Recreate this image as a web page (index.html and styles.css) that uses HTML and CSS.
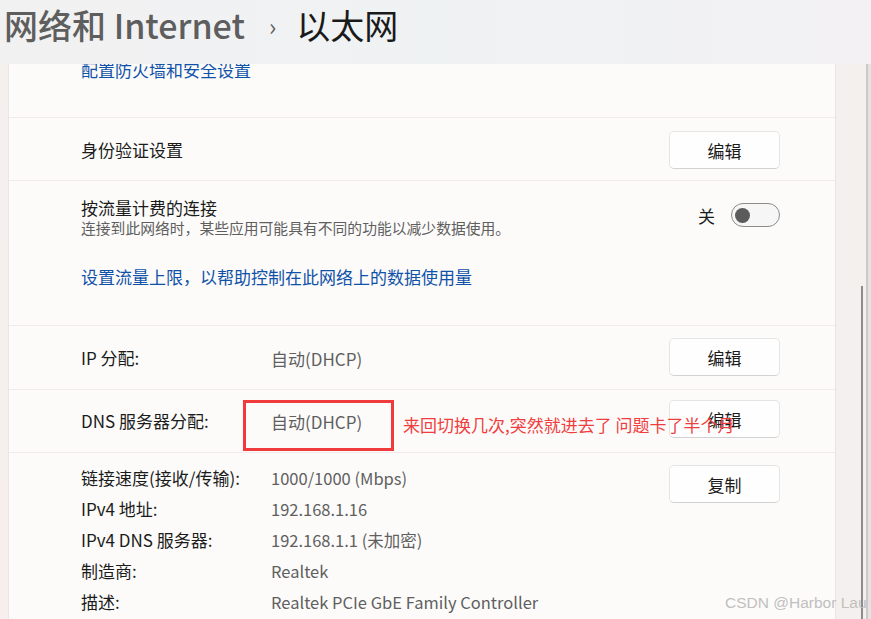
FILE: index.html
```html
<!DOCTYPE html>
<html lang="zh-CN">
<head>
<meta charset="utf-8">
<title>以太网</title>
<link rel="stylesheet" href="styles.css">
</head>
<body>
<div class="window">
  <header class="top">
    <span class="crumb">网络和 Internet</span>
    <span class="chev">›</span>
    <span class="current">以太网</span>
  </header>
  <div class="main">
    <div class="scroll">
      <section class="card">
        <div class="sec sec-fw">
          <a class="link link-fw">配置防火墙和安全设置</a>
        </div>
        <div class="sec sec-row">
          <span class="label">身份验证设置</span>
          <button class="btn">编辑</button>
        </div>
        <div class="sec sec-metered">
          <div class="metered-head">
            <div class="metered-text">
              <div class="label">按流量计费的连接</div>
              <div class="sub">连接到此网络时，某些应用可能具有不同的功能以减少数据使用。</div>
            </div>
            <div class="toggle-wrap">
              <span class="toggle-label">关</span>
              <span class="toggle"><span class="knob"></span></span>
            </div>
          </div>
          <a class="link link-limit">设置流量上限，以帮助控制在此网络上的数据使用量</a>
        </div>
        <div class="sec sec-row sec-ip">
          <div class="pair"><span class="label key">IP 分配:</span><span class="value">自动(DHCP)</span></div>
          <button class="btn">编辑</button>
        </div>
        <div class="sec sec-row sec-dns">
          <div class="pair"><span class="label key">DNS 服务器分配:</span><span class="value">自动(DHCP)</span></div>
          <button class="btn">编辑</button>
          <div class="redbox"></div>
          <div class="note">来回切换几次,突然就进去了 问题卡了半个月</div>
        </div>
        <div class="sec sec-details">
          <dl class="details">
            <dt>链接速度(接收/传输):</dt><dd>1000/1000 (Mbps)</dd>
            <dt>IPv4 地址:</dt><dd>192.168.1.16</dd>
            <dt>IPv4 DNS 服务器:</dt><dd>192.168.1.1 (未加密)</dd>
            <dt>制造商:</dt><dd>Realtek</dd>
            <dt>描述:</dt><dd>Realtek PCIe GbE Family Controller</dd>
          </dl>
          <button class="btn btn-copy">复制</button>
        </div>
      </section>
    </div>
    <div class="scrollbar"><div class="thumb"></div></div>
    <div class="edge"></div>
  </div>
</div>
<div class="watermark">CSDN @Harbor Lau</div>
</body>
</html>
```

FILE: styles.css
```css
* { box-sizing: border-box; }
html, body { margin: 0; padding: 0; }
body {
  width: 871px;
  height: 619px;
  overflow: hidden;
  background: #f4f1f0;
  font-family: "Segoe UI", "Noto Sans CJK SC", "Noto Sans", sans-serif;
  color: #1b1b1b;
  position: relative;
}
.window {
  display: flex;
  flex-direction: column;
  height: 619px;
}
.top {
  height: 64px;
  flex: none;
  display: flex;
  align-items: flex-start;
  padding: 0 0 0 4px;
  background: linear-gradient(90deg, #f2f1f2 0%, #eff2f3 50%, #f3f1f3 100%);
  font-size: 34px;
  line-height: 50px;
  white-space: nowrap;
}
.crumb { color: #5e5e5e; font-weight: 500; }
.chev { color: #5e5e5e; font-size: 24px; line-height: 52px; margin: 0 20px 0 24px; }
.current { color: #1a1a1a; }
.main {
  flex: 1;
  display: flex;
  min-height: 0;
  background: #f4f0ee;
}
.scroll {
  flex: none;
  width: 836px;
  padding-left: 8px;
  background: linear-gradient(#f4f0ee, #f7efee);
  overflow: hidden;
}
.card {
  width: 828px;
  background: #fcfbfa;
  border-left: 1px solid #ebe6e5;
  border-right: 1px solid #e8e4e3;
}
.sec {
  padding: 0 55px 0 72px;
  border-top: 1px solid #efebea;
  position: relative;
}
.sec-fw {
  border-top: none;
  height: 53px;
  display: flex;
  align-items: flex-start;
}
.link {
  display: block;
  color: #0f52a8;
  font-size: 17px;
  line-height: 24px;
  text-decoration: none;
}
.link-fw { margin-top: -6px; }
.sec-row {
  display: flex;
  align-items: center;
  justify-content: space-between;
  height: 63px;
}
.label { font-size: 17px; line-height: 24px; color: #1b1b1b; }
.btn {
  width: 111px;
  height: 38px;
  border: 1px solid #e5e5e5;
  border-bottom-color: #d2d2d2;
  border-radius: 5px;
  background: #fefefe;
  font-family: inherit;
  font-size: 17px;
  color: #1b1b1b;
  padding: 0;
}
.sec-row:not(.sec-ip):not(.sec-dns) { padding-top: 2px; }
.sec-metered { height: 145px; padding-top: 15px; }
.metered-head {
  display: flex;
  justify-content: space-between;
  align-items: center;
}
.sub { font-size: 14.8px; line-height: 19px; color: #5f5f5f; margin-top: -2px; }
.toggle-wrap { display: flex; align-items: center; gap: 16px; margin-top: -3px; }
.toggle-label { font-size: 17px; color: #1b1b1b; }
.toggle {
  width: 49px;
  height: 24px;
  border: 1px solid #8b8b8b;
  border-radius: 12px;
  background: #f6f6f6;
  display: flex;
  align-items: center;
  padding-left: 3px;
}
.knob { width: 15px; height: 15px; border-radius: 50%; background: #5b5b5b; }
.link-limit { margin-top: 28px; }
.sec-ip { height: 64px; padding-top: 1px; }
.sec-dns { height: 63px; }
.pair { display: flex; align-items: center; }
.key { width: 190px; }
.value { font-size: 17px; color: #5f5f5f; }
.sec-ip .btn { margin-top: -2px; }
.sec-dns .btn { margin-top: -4px; }
.redbox {
  position: absolute;
  left: 234px;
  top: 10px;
  width: 151px;
  height: 51px;
  border: 3px solid #ef3b3b;
}
.note {
  position: absolute;
  left: 394px;
  top: 24px;
  font-size: 17px;
  line-height: 22px;
  color: #f03e3e;
  white-space: nowrap;
}
.sec-details {
  display: flex;
  justify-content: space-between;
  align-items: flex-start;
  height: 170px;
  padding-top: 9px;
}
.details {
  margin: 0;
  display: grid;
  grid-template-columns: 190px auto;
  grid-auto-rows: 31px;
  align-items: center;
  font-size: 17px;
}
.details dt { color: #1b1b1b; }
.details dd { margin: 0; color: #5f5f5f; font-size: 16.5px; }
.btn-copy { margin-top: 3px; }
.scrollbar {
  flex: none;
  width: 30px;
  position: relative;
  background: #f4f0ee;
}
.thumb {
  position: absolute;
  left: 25px;
  top: 222px;
  bottom: 0;
  width: 2px;
  background: #8c8c8c;
}
.edge {
  flex: 1;
  border-left: 2px solid #c9c9c9;
  background: #e4e2e2;
}
.watermark {
  position: absolute;
  left: 725px;
  top: 594px;
  font-family: "Liberation Sans", Arial, sans-serif;
  font-size: 15.5px;
  color: #c0c0c0;
  white-space: nowrap;
}
```
